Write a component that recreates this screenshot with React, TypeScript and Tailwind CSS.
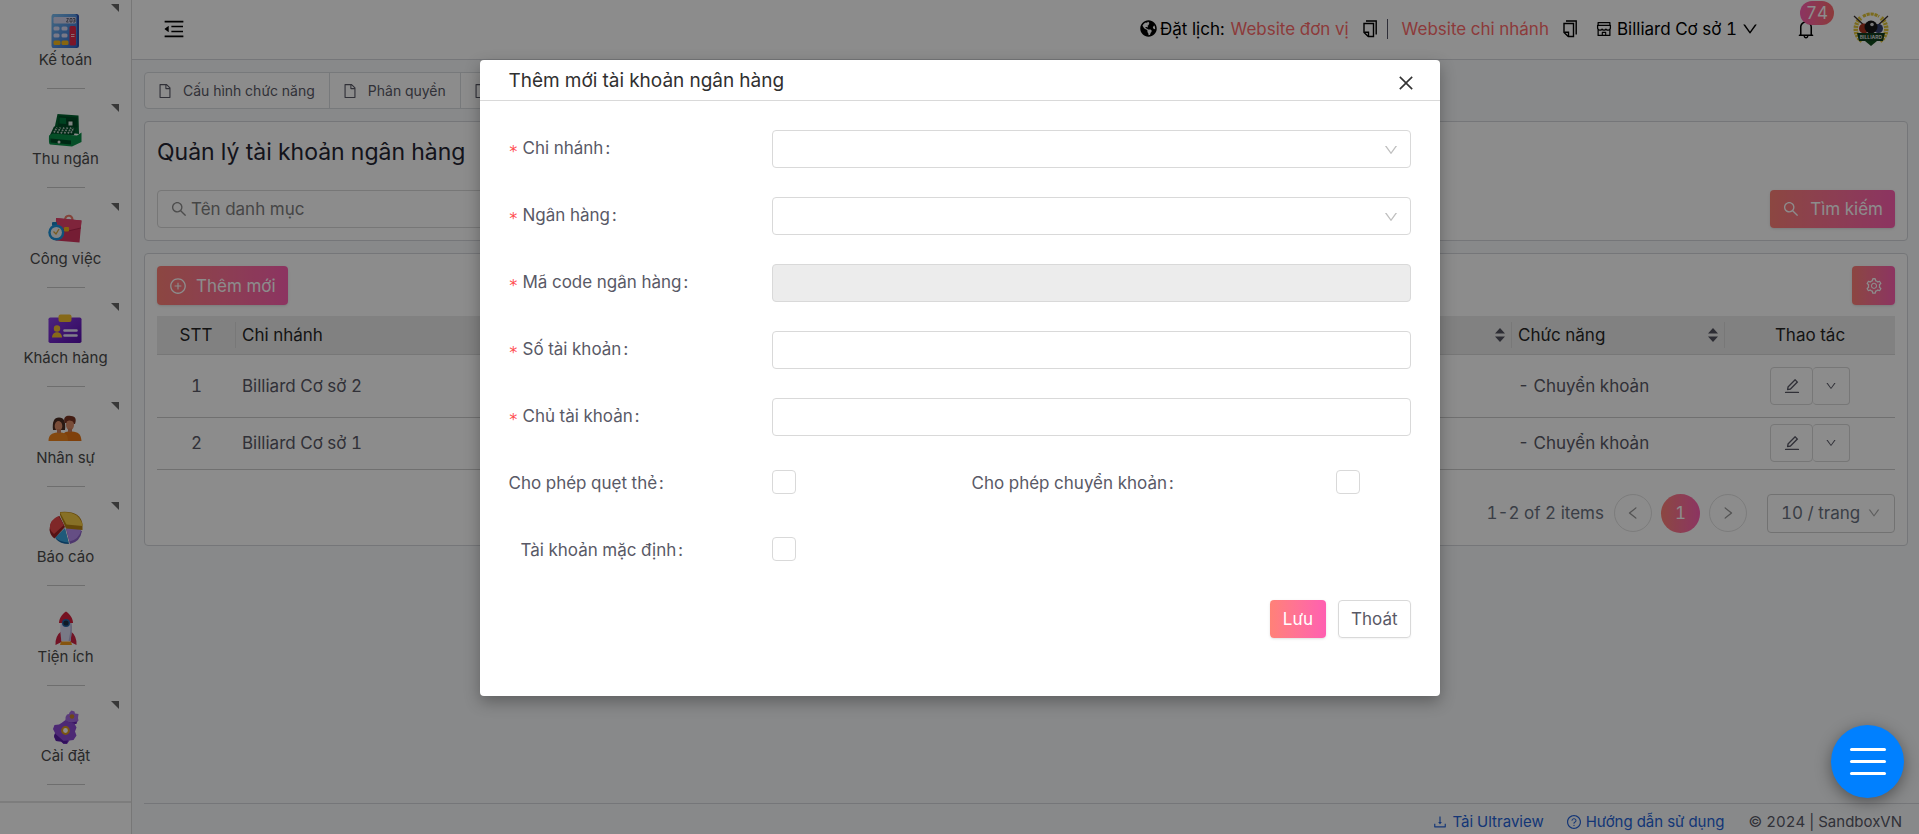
import React from "react";
import {
  AiOutlineMenuFold, AiOutlineFile, AiOutlineSearch, AiOutlinePlusCircle, AiOutlineEdit, AiOutlineDown,
  AiOutlineLeft, AiOutlineRight, AiOutlineSetting, AiOutlineDownload, AiOutlineQuestionCircle,
  AiOutlineBell, AiOutlineShop, AiOutlineClose,
} from "react-icons/ai";
import { FaGlobeAmericas } from "react-icons/fa";

function CalculatorArt() {
  return (
    <svg viewBox="0 0 34 34" className="size-[34px]" aria-hidden="true">
      <defs>
        <linearGradient id="calc" x1="0" y1="0" x2="1" y2="1">
          <stop offset="0" stopColor="#7cc0f2" />
          <stop offset="1" stopColor="#2f66cc" />
        </linearGradient>
      </defs>
      <rect x="4" y="0" width="27" height="34" rx="2.5" fill="#2a52b0" />
      <rect x="3.5" y="0" width="25.5" height="34" rx="2.5" fill="url(#calc)" />
      <rect x="5.5" y="3" width="22.500" height="6.5" rx="1.2" fill="#d6d6ee" />
      <path d="M18.500 4.500h2l-2 3.500h2M22 4.500h2v3.500h-2zM25 4.500h2v3.500h-2M25.500 6.200h1.500" stroke="#4a4a5a" strokeWidth="0.8" fill="none" />
      <g fill="#dcdcf6">
        <rect x="5.500" y="12.500" width="6" height="4" rx="1.500" />
        <rect x="13.500" y="12.500" width="6" height="4" rx="1.500" />
        <rect x="5.500" y="19.500" width="6" height="4" rx="1.500" />
        <rect x="13.500" y="19.500" width="6" height="4" rx="1.500" />
      </g>
      <rect x="5.500" y="26.500" width="7" height="4.500" rx="1.500" fill="#f6b91c" />
      <rect x="13.500" y="26.500" width="7" height="4.500" rx="1.500" fill="#f6b91c" />
      <rect x="21.500" y="12" width="6.500" height="19.500" rx="1.500" fill="#e0284c" />
      <path d="M23 20.500h3.500M23 22.500h3.500" stroke="#ffc5cf" strokeWidth="1" />
    </svg>
  );
}

function RegisterArt() {
  return (
    <svg viewBox="0 0 34 34" className="size-[34px]" aria-hidden="true">
      <path d="M9.500 1 30.500 2.500 31 21 6 17.500z" fill="#00622f" />
      <path d="M11 3 29.500 4.500v10L10 13.500z" fill="#004a25" />
      <path d="M11.500 4.500 18 5v6l-6.500-.5z" fill="#00793d" />
      <path d="m19.500 7 6 .5v5l-6-.5z" fill="#003a1d" />
      <rect x="20.500" y="8.500" width="4" height="4" fill="#e9f3ee" />
      <path d="M6 13.500 28 14.500 26 22H2z" fill="#024d28" />
      <path d="m6 19.500 3-5M9.500 20l3-5.500M13 20.500l3-6M16.500 20.500l3-6M20 20.500l3-6M23 20l2.500-5" stroke="#b9cdc2" strokeWidth="1.700" strokeDasharray="1.800 0.800" />
      <path d="M1 22.500 5 20.500 29 22.500 33.500 19.500V29L24 33.500 2 31.500Q.5 31 1 22.500z" fill="#0a8f48" />
      <path d="M2.500 25.500 23 27.500v4L2.500 29.500z" fill="#004a25" />
      <circle cx="11" cy="29" r="1.500" fill="#e8e8e8" />
    </svg>
  );
}

function BriefcaseArt() {
  return (
    <svg viewBox="0 0 34 34" className="size-[34px]" aria-hidden="true">
      <path d="M17 7.500c0-6 7.500-6.500 7.500-.5" fill="none" stroke="#ef7d6a" strokeWidth="2.200" />
      <path d="M8 5 33.500 7.500 31.500 29.500 7.500 27.500z" fill="#d63560" />
      <path d="M8 5 33.500 7.500 32.800 15 20 18 8 14z" fill="#e8426c" />
      <path d="m8 14 12 4 12.800-3" stroke="#a91f48" strokeWidth=".8" fill="none" />
      <rect x="16" y="14" width="5" height="4.500" rx="1" fill="#f5b51b" />
      <rect x="4" y="9" width="5" height="4" rx="1" fill="#1783c4" />
      <circle cx="8.300" cy="19.500" r="8" fill="#1c94dc" />
      <circle cx="8.300" cy="19.500" r="5.600" fill="#eef1f4" />
      <path d="m5.500 18.500 2.500 2.500 3-5" stroke="#d8a63a" strokeWidth="1.300" fill="none" />
    </svg>
  );
}

function BadgeArt() {
  return (
    <svg viewBox="0 0 34 34" className="size-[34px]" aria-hidden="true">
      <defs>
        <linearGradient id="idcard" x1="0" y1="0" x2="1" y2="1">
          <stop offset="0" stopColor="#8a3fe6" />
          <stop offset="1" stopColor="#5a0fb0" />
        </linearGradient>
      </defs>
      <rect x="0.500" y="5.500" width="33" height="25.500" rx="1.800" fill="url(#idcard)" />
      <rect x="10.500" y="2.500" width="13" height="7.500" rx="2" fill="#f5bf2e" />
      <circle cx="9" cy="16.500" r="3.200" fill="#f5bf2e" />
      <path d="M4 25.500c0-7 10-7 10 0z" fill="#f5bf2e" />
      <path d="M16.500 18.500h12M16.500 23.500h12" stroke="#ece6fb" strokeWidth="2.600" strokeLinecap="round" />
    </svg>
  );
}

function PeopleArt() {
  return (
    <svg viewBox="0 0 34 34" className="size-[34px]" aria-hidden="true">
      <g transform="translate(0 -3)">
        <path d="M5 21c-1-8 1-12.500 6-12.500s7 4.500 6 12.500z" fill="#4a2c22" />
        <path d="M16.500 14C15 7 19 6.500 23 7c5 0 5.500 4 4 8z" fill="#7a3523" />
        <ellipse cx="10.500" cy="17" rx="3.800" ry="5" fill="#dd8d69" />
        <ellipse cx="22" cy="16" rx="4" ry="5.300" fill="#dd8d69" />
        <path d="M18 13c2-2 5-2 8 0l.5-3-4-2-4.500 2z" fill="#7a3523" />
        <path d="M6.500 14c2-3 5-3 8 0l-1-3-3.500-1-2.500 1z" fill="#4a2c22" />
        <path d="M9 20h4v4c-1 1.500-3 1.500-4 0zM20 19.500h4v4c-1 1.500-3 1.500-4 0z" fill="#c97a58" />
        <path d="M14 32c0-8 3-9 6-9.500q2 1.500 4 0c6 .5 9 2 9.500 9.500z" fill="#e87514" />
        <path d="M.5 32C.5 26 4 24 9 23.500q2 1.500 4 0c5 .5 7 2.500 7 8.500z" fill="#f0861e" />
      </g>
    </svg>
  );
}

function PieArt() {
  return (
    <svg viewBox="0 0 34 34" className="size-[34px]" aria-hidden="true">
      <path d="M16 19 6.500 27.500Q11 33 20 33z" fill="#1668a8" />
      <path d="M16 17 6 26.500Q11 31 19.500 31.500z" fill="#3aa5de" />
      <path d="M17 18 21 33Q31 31 33 20z" fill="#8d63c8" />
      <path d="M17 16.500 20.500 30.500Q30 28.500 32.500 18.500z" fill="#b98ff0" />
      <path d="M16 16 10.500 5Q.5 9 .5 19 1.500 25 5.500 27.500z" fill="#9c2126" />
      <path d="M15 14 9.500 5Q.5 9 .8 17 1.500 20.500 5 23z" fill="#e8474a" />
      <path d="M17 17.500 11 4v-3Q31-1 33.500 13v6z" fill="#b98312" />
      <path d="M17.500 13.500 11 1.500Q29-1 33.500 13.500V15z" fill="#f6cd45" />
    </svg>
  );
}

function RocketArt() {
  return (
    <svg viewBox="0 0 34 34" className="size-[34px]" aria-hidden="true">
      <path d="M12.500 20Q6 25 6.500 34l6-3zM21.500 20Q28 25 27.500 34l-6-3z" fill="#cf2444" />
      <path d="M17 2C9.500 9 11 21 12.500 30h9C23 21 24.500 9 17 2z" fill="#dcdcf5" />
      <path d="M19 5c4 8 2.500 17 .5 25h2C23 21 24.500 11 19 5z" fill="#b5b3da" />
      <path d="M17 .5C12 4 10 8.500 10 12h14c0-3.500-2-8-7-11.500z" fill="#d81f3c" />
      <circle cx="17" cy="12" r="4" fill="#2466a8" />
      <circle cx="17" cy="12" r="2.600" fill="#1d2f45" />
      <path d="M11 34l1-3.500h10L23 34z" fill="#f39a1d" />
    </svg>
  );
}

function GearsArt() {
  return (
    <svg viewBox="0 0 34 34" className="size-[34px]" aria-hidden="true">
      <path d="m20.500 2.500 2-2 3 1 .5 2 3.500.5-.5 4 .5 2.500-2.500 3h-4l-3-.5-3-3-.5-3 1.500-2.500 2-.5z" fill="#a56be0" />
      <path d="M16 7.500q1.500 5.500 6.500 5l5.500-1-.5 2.500h-6q-5-1-5.500-6.500z" fill="#6a26b8" />
      <circle cx="23" cy="6.500" r="2.300" fill="#c9822a" />
      <path d="m12.500 13 4-3 4 2.500 5 1 2 4-1.500 4 1.500 4-3 4.500-4 .5-2.500 3.500h-3.500L12 31.500l-5-.5-2-4 1-4-2-4 1.500-4 4.500-.5z" fill="#8c4bd6" />
      <path d="m5 26 1-2.500 4 3.500 4.500 4 4.500-.5-1 3h-3.500L12 31.500l-5-.5z" fill="#5a1fa6" />
      <circle cx="16.500" cy="20.500" r="3.400" fill="#fff" stroke="#dd9a1c" strokeWidth="2" />
    </svg>
  );
}

function ClubLogo() {
  return (
    <svg viewBox="0 0 36 36" className="size-9" role="img" aria-label="Billiard">
      <path d="M9 30A14.500 14.500 0 0 1 8.500 6.500M27 30A14.500 14.500 0 0 0 27.500 6.500" fill="none" stroke="#e0c436" strokeWidth="4.500" strokeDasharray="2.200 0.800" />
      <path d="M10 5.500Q18 .5 26 5.500" fill="none" stroke="#e0c436" strokeWidth="3" strokeDasharray="3.200 0.800" />
      <path d="M1 5 14 17M35 5 22 17" stroke="#3a2f2a" strokeWidth="1.300" />
      <circle cx="11" cy="17.500" r="5" fill="#a8331f" />
      <circle cx="25.500" cy="17.500" r="4.500" fill="#34406e" />
      <circle cx="18" cy="16" r="6.500" fill="#161616" />
      <circle cx="19" cy="13.500" r="1.800" fill="#dcdcdc" />
      <path d="M4 22h28l-2 8H6z" fill="#0f3d1c" />
      <path d="m12 30 6 5 6-5z" fill="#124a1c" />
      <text x="18" y="28" textAnchor="middle" fontSize="5" fontWeight="700" fill="#ddd" fontFamily="Inter, sans-serif">BILLIARD</text>
    </svg>
  );
}

function CopyIcon() {
  return (
    <svg viewBox="0 0 14 18" className="h-[18px] w-3.5" fill="none" stroke="currentColor" strokeWidth="1.400" aria-hidden="true">
      <path d="M3 1h10.200v13.500" />
      <path d="M1 3.500h9.500v13H5.300L1 12.500z" />
      <path d="M1.300 12.300h4.200v4" />
    </svg>
  );
}

const menu = [
  { label: "Kế toán", art: <CalculatorArt />, more: true },
  { label: "Thu ngân", art: <RegisterArt />, more: true },
  { label: "Công việc", art: <BriefcaseArt />, more: true },
  { label: "Khách hàng", art: <BadgeArt />, more: true },
  { label: "Nhân sự", art: <PeopleArt />, more: true },
  { label: "Báo cáo", art: <PieArt />, more: true },
  { label: "Tiện ích", art: <RocketArt />, more: false },
  { label: "Cài đặt", art: <GearsArt />, more: true },
];

function Sidebar() {
  return (
    <nav className="flex w-[132px] shrink-0 flex-col border-r border-[#d9d9d9] bg-white">
      <ul className="grid h-[803px] auto-rows-fr border-b-2 border-[#e4e4e4] pb-[5px]">
        {menu.map((m) => (
          <li key={m.label} className="relative flex flex-col items-center justify-end pb-[11px]">
            {m.more && (
              <svg viewBox="0 0 8 8" className="absolute top-1 right-3 size-2" aria-hidden="true">
                <path d="M0 0h8v8z" fill="#666" />
              </svg>
            )}
            <a href="#" className="flex flex-col items-center text-[15px] leading-6 text-[#4b4b4b]">
              {m.art}
              {m.label}
            </a>
            <span className="mt-4 h-px w-[38px] bg-[#c8c8c8]" />
          </li>
        ))}
      </ul>
    </nav>
  );
}

function Header() {
  return (
    <header className="flex h-15 items-center justify-between border-b border-[#d5d8dc] bg-white pr-[30px] pb-0.5 pl-[30px] text-black">
      <button type="button" aria-label="Thu gọn menu">
        <AiOutlineMenuFold className="size-6" />
      </button>
      <div className="flex items-center text-[17px]">
        <FaGlobeAmericas className="mr-[3px] size-[17px]" />
        <span>Đặt lịch:</span>
        <a href="#" className="ml-1.5 text-[#ff6b6b]">Website đơn vị</a>
        <button type="button" aria-label="Sao chép" className="ml-3.5"><CopyIcon /></button>
        <span className="mr-3.5 ml-2.5 h-5 w-px bg-[#555566]" />
        <a href="#" className="text-[#ff6b6b]">Website chi nhánh</a>
        <button type="button" aria-label="Sao chép" className="mr-[18px] ml-3.5"><CopyIcon /></button>
        <button type="button" className="flex items-center gap-1">
          <AiOutlineShop className="size-[18px]" />
          Billiard Cơ sở 1
          <AiOutlineDown className="size-[18px]" />
        </button>
        <button type="button" aria-label="Thông báo" className="relative ml-9">
          <AiOutlineBell className="size-[22px]" />
          <span className="absolute -top-[17px] left-[5px] rounded-full bg-linear-to-r from-[#ff5fb1] to-[#ff6b6b] px-1.5 leading-6 text-white">74</span>
        </button>
        <span className="ml-9"><ClubLogo /></span>
      </div>
    </header>
  );
}

const grad = "bg-linear-to-r from-[#ff8177] to-[#ff5fb1] text-white";

function Sorter() {
  return (
    <svg viewBox="0 0 10 14" className="h-3.5 w-2.5 shrink-0" fill="#53535f" aria-hidden="true">
      <path d="M5 0 10 5.500H0zM5 14 0 8.500h10z" />
    </svg>
  );
}

function Table() {
  return (
    <table className="mt-[11px] w-full table-fixed border-collapse text-left">
      <thead>
        <tr className="h-[38px] border-b border-[#d9d9d9] bg-[#ececec] text-[#262626]">
          <th className="w-[79px] font-normal">
            <span className="flex h-[26px] items-center justify-center border-r border-[#dadada]">STT</span>
          </th>
          <th className="pl-1.5 font-normal">Chi nhánh</th>
          <th className="w-[213px] font-normal">
            <span className="flex h-[26px] items-center justify-end border-r border-[#dadada] pr-1.5"><Sorter /></span>
          </th>
          <th className="w-[213px] font-normal">
            <span className="flex h-[26px] items-center justify-between border-r border-[#dadada] px-1.5">Chức năng<Sorter /></span>
          </th>
          <th className="w-[170px] text-center font-normal">Thao tác</th>
        </tr>
      </thead>
      <tbody>
        {["Billiard Cơ sở 2", "Billiard Cơ sở 1"].map((name, i) => (
          <tr key={name} className={i === 0 ? "h-[63px] border-b border-[#cdcdcd]" : "h-[52px] border-b border-[#cdcdcd]"}>
            <td className="text-center">{i + 1}</td>
            <td className="pl-1.5">{name}</td>
            <td />
            <td className="pl-1.5">- Chuyển khoản</td>
            <td className="pl-[45px]">
              <span className="flex">
                <button type="button" aria-label="Sửa" className="flex h-[38px] w-[43px] items-center justify-center rounded-sm border border-[#d9d9d9]">
                  <AiOutlineEdit className="size-[18px]" />
                </button>
                <button type="button" aria-label="Thêm thao tác" className="flex h-[38px] w-[37px] items-center justify-center rounded-sm border border-l-0 border-[#d9d9d9]">
                  <AiOutlineDown className="size-3" />
                </button>
              </span>
            </td>
          </tr>
        ))}
      </tbody>
    </table>
  );
}

function Required() {
  return <span className="w-3.5 pt-2 font-['DejaVu_Sans_Mono',monospace] text-base leading-4 text-[#ff4d4f]">*</span>;
}

function Colon() {
  return <span className="ml-0.5">:</span>;
}

function Dialog() {
  const label = "flex w-[263px] shrink-0 items-center pb-0.5";
  const field = "h-[38px] min-w-0 flex-1 rounded border border-[#d9d9d9]";
  const box = "mb-1 size-6 shrink-0 appearance-none rounded border border-[#d9d9d9] bg-white";
  return (
    <div className="absolute inset-0 flex items-start justify-center bg-black/45 pt-15">
      <form role="dialog" aria-labelledby="dlg" className="w-[960px] rounded bg-white pb-[58px] text-[#595966] shadow-[0_6px_16px_rgba(0,0,0,0.3)]">
        <div className="flex h-[41px] items-center justify-between border-b border-[#d9d9d9] pr-6 pl-[29px]">
          <h2 id="dlg" className="pt-0.5 text-[19px] text-[#303030]">Thêm mới tài khoản ngân hàng</h2>
          <button type="button" aria-label="Đóng" className="mt-1.5 text-[#333]">
            <AiOutlineClose className="size-5" />
          </button>
        </div>
        <div className="flex flex-col gap-[29px] px-[29px] pt-[29px]">
          {["Chi nhánh", "Ngân hàng"].map((t, i) => (
            <div key={t} className="flex items-center">
              <label htmlFor={"s" + i} className={label}><Required />{t}<Colon /></label>
              <div className="relative flex flex-1">
                <select id={"s" + i} className={field + " appearance-none bg-white"} />
                <AiOutlineDown className="pointer-events-none absolute top-3 right-3 size-4 text-[#bfbfbf]" />
              </div>
            </div>
          ))}
          {["Mã code ngân hàng", "Số tài khoản", "Chủ tài khoản"].map((t, i) => (
            <div key={t} className="flex items-center">
              <label htmlFor={"t" + i} className={label}><Required />{t}<Colon /></label>
              <input id={"t" + i} type="text" disabled={i === 0} className={field + " disabled:bg-[#ececec]"} />
            </div>
          ))}
          <div className="flex h-[38px] items-center">
            <label htmlFor="c0" className={label}>Cho phép quẹt thẻ<Colon /></label>
            <input id="c0" type="checkbox" className={box} />
            <label htmlFor="c1" className="ml-44 flex w-[364px] items-center pb-0.5">Cho phép chuyển khoản<Colon /></label>
            <input id="c1" type="checkbox" className={box} />
          </div>
          <div className="flex h-[38px] items-center">
            <label htmlFor="c2" className={label + " pl-3"}>Tài khoản mặc định<Colon /></label>
            <input id="c2" type="checkbox" className={box} />
          </div>
        </div>
        <div className="mt-[30px] flex justify-end gap-3 px-[29px]">
          <button type="submit" className={"h-[38px] rounded px-[13px] shadow-sm " + grad}>Lưu</button>
          <button type="button" className="h-[38px] rounded border border-[#d9d9d9] px-3 shadow-xs">Thoát</button>
        </div>
      </form>
    </div>
  );
}

export default function App() {
  return (
    <div className="relative flex h-screen min-h-[640px] overflow-hidden bg-[#f8fafc] font-['Inter','Noto_Sans',sans-serif] text-[17px] leading-6 text-[#595966] tabular-nums">
      <Sidebar />
      <div className="flex min-w-0 flex-1 flex-col">
        <Header />
        <main className="flex flex-1 flex-col gap-3 pt-3 pr-[11px] pl-3">
          <div className="flex h-[37px] self-start rounded border border-[#d9dce0] bg-white text-sm">
            {["Cấu hình chức năng", "Phân quyền"].map((t) => (
              <a key={t} href="#" className="flex items-center gap-2.5 border-r border-[#d9dce0] pr-3.5 pl-3">
                <AiOutlineFile className="size-4" />
                {t}
              </a>
            ))}
            <a href="#" aria-label="Tài khoản ngân hàng" className="flex items-center px-3">
              <AiOutlineFile className="size-4" />
            </a>
          </div>
          <section className="rounded border border-[#d5d8dc] bg-white p-3">
            <h1 className="pt-0.5 text-[23px] leading-8 text-[#262633]">Quản lý tài khoản ngân hàng</h1>
            <div className="mt-[22px] flex justify-between">
              <label className="flex h-[38px] w-[430px] items-center gap-[3px] rounded border border-[#d9d9d9] px-3">
                <AiOutlineSearch className="size-[18px] text-[#8c8c8c]" />
                <input aria-label="Tên danh mục" placeholder="Tên danh mục" className="min-w-0 flex-1 placeholder:text-[#808080]" />
              </label>
              <button type="button" className={"flex h-[38px] items-center gap-2.5 rounded px-3 shadow-sm " + grad}>
                <AiOutlineSearch className="size-[18px]" />
                Tìm kiếm
              </button>
            </div>
          </section>
          <section className="rounded border border-[#d5d8dc] bg-white p-3">
            <div className="flex justify-between">
              <button type="button" className={"flex h-[39px] items-center gap-[9px] rounded px-3 shadow-sm " + grad}>
                <AiOutlinePlusCircle className="size-[18px]" />
                Thêm mới
              </button>
              <button type="button" aria-label="Cài đặt bảng" className={"flex h-[39px] w-[43px] items-center justify-center rounded shadow-sm " + grad}>
                <AiOutlineSetting className="size-[18px]" />
              </button>
            </div>
            <Table />
            <div className="mt-6 flex items-center justify-end text-[#6b7280]">
              <span>1-2 of 2 items</span>
              <button type="button" aria-label="Trang trước" className="ml-2.5 flex size-[38px] items-center justify-center rounded-full border border-[#e2e2e2] text-[#999]">
                <AiOutlineLeft className="size-4" />
              </button>
              <button type="button" className={"ml-[9px] size-[39px] rounded-full " + grad}>1</button>
              <button type="button" aria-label="Trang sau" className="ml-[9px] flex size-[38px] items-center justify-center rounded-full border border-[#e2e2e2] text-[#999]">
                <AiOutlineRight className="size-4" />
              </button>
              <div className="relative ml-5">
                <select aria-label="Số dòng mỗi trang" className="h-[39px] w-32 appearance-none rounded border border-[#d0d0d0] bg-white pl-[13px]">
                  <option>10 / trang</option>
                </select>
                <AiOutlineDown className="pointer-events-none absolute top-3 right-3.5 size-3.5 text-[#aaa]" />
              </div>
            </div>
          </section>
        </main>
        <footer className="ml-3 flex h-[31px] items-center justify-end border-t border-[#d5d8dc] pt-1.5 pr-[17px] text-[15px]">
          <a href="#" className="flex items-center gap-1 text-[#2563d8]"><AiOutlineDownload className="size-4" />Tải Ultraview</a>
          <a href="#" className="ml-[22px] flex items-center gap-1 text-[#2563d8]"><AiOutlineQuestionCircle className="size-4" />Hướng dẫn sử dụng</a>
          <span className="ml-6">© 2024 | SandboxVN</span>
        </footer>
      </div>
      <Dialog />
      <button type="button" aria-label="Menu nhanh" className="absolute right-[15px] bottom-9 flex size-[73px] flex-col items-center justify-center gap-[9px] rounded-full bg-[#0080ff] shadow-[0_4px_16px_rgba(0,0,0,0.4)]">
        <span className="h-[3px] w-9 rounded-full bg-white" />
        <span className="h-[3px] w-9 rounded-full bg-white" />
        <span className="h-[3px] w-9 rounded-full bg-white" />
      </button>
    </div>
  );
}
